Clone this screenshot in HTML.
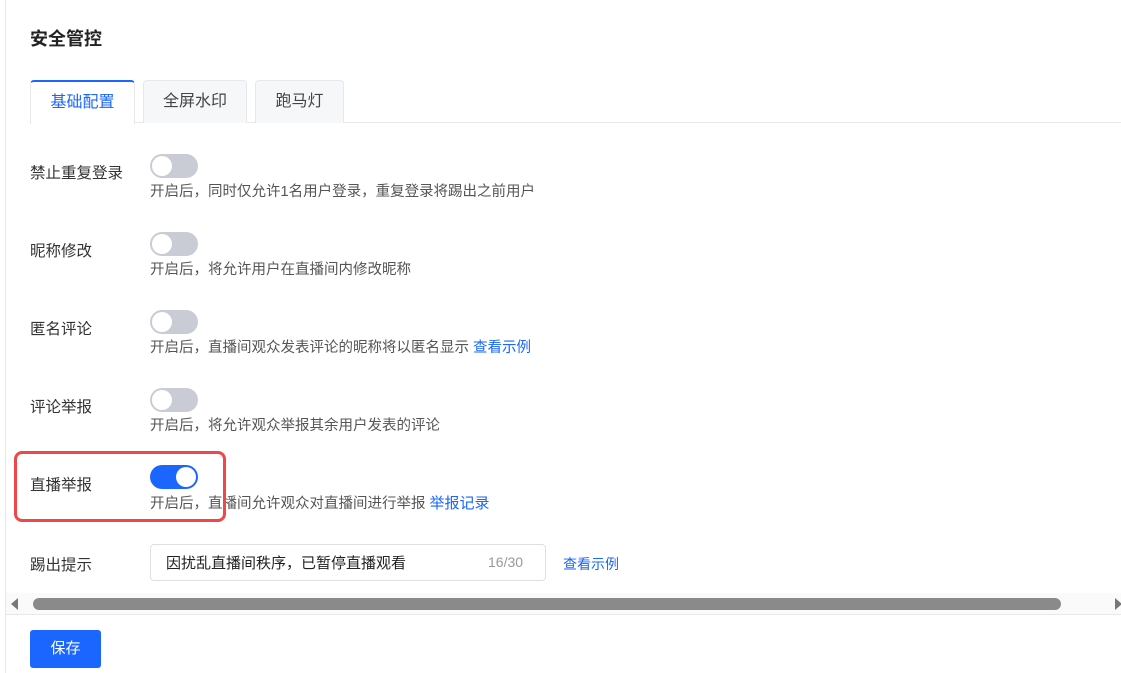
<!DOCTYPE html>
<html><head><meta charset="utf-8"><style>
*{margin:0;padding:0;box-sizing:border-box}
body{width:1121px;height:673px;overflow:hidden;background:#fff;font-family:"Liberation Sans","Noto Sans CJK SC",sans-serif;position:relative;color:#333}
.a{position:absolute;white-space:nowrap}
.lbl{font-size:15.5px;color:#333;left:30px}
.desc{font-size:14.5px;color:#555;left:150px}
.tg{position:absolute;left:150px;width:48px;height:24px;border-radius:12px;background:#c9ccd4}
.tg:after{content:"";position:absolute;left:2px;top:2px;width:20px;height:20px;border-radius:50%;background:#fff}
.tg.on{background:#1a66ff}.tg.on:after{left:26px}
.tab{position:absolute;top:80px;height:43px;border:1px solid #e6e8ec;border-bottom:none;border-radius:4px 4px 0 0;background:#f6f7f9;font-size:16px;color:#444;text-align:center;line-height:42px}
.link{color:#1a66ff}
</style></head><body>
<div class="a" style="left:5px;top:0;width:1px;height:673px;background:#e4e6ef"></div>
<div class="a" style="left:30px;top:25px;font-size:18px;font-weight:bold;color:#222">安全管控</div>
<div class="a" style="left:30px;top:122px;width:1091px;height:1px;background:#e6e8ec"></div>
<div class="tab" style="left:30px;width:105px;background:#fff;border-top:2px solid #1a66ff;color:#1a66ff;height:44px">基础配置</div>
<div class="tab" style="left:143px;width:104px">全屏水印</div>
<div class="tab" style="left:255px;width:89px">跑马灯</div>

<div class="a lbl" style="top:161px">禁止重复登录</div>
<div class="tg" style="top:154px"></div>
<div class="a desc" style="top:180px">开启后，同时仅允许1名用户登录，重复登录将踢出之前用户</div>

<div class="a lbl" style="top:239px">昵称修改</div>
<div class="tg" style="top:232px"></div>
<div class="a desc" style="top:258px">开启后，将允许用户在直播间内修改昵称</div>

<div class="a lbl" style="top:317px">匿名评论</div>
<div class="tg" style="top:310px"></div>
<div class="a desc" style="top:336px">开启后，直播间观众发表评论的昵称将以匿名显示 <span class="link">查看示例</span></div>

<div class="a lbl" style="top:395px">评论举报</div>
<div class="tg" style="top:388px"></div>
<div class="a desc" style="top:414px">开启后，将允许观众举报其余用户发表的评论</div>

<div class="a lbl" style="top:473px">直播举报</div>
<div class="tg on" style="top:465px"></div>
<div class="a desc" style="top:492px">开启后，直播间允许观众对直播间进行举报 <span class="link" style="font-size:15px">举报记录</span></div>
<div class="a" style="left:14px;top:451px;width:212px;height:71px;border:3px solid #f04848;border-radius:8px"></div>

<div class="a lbl" style="top:553px">踢出提示</div>
<div class="a" style="left:150px;top:544px;width:396px;height:37px;border:1px solid #dcdfe6;border-radius:4px"></div>
<div class="a" style="left:166px;top:552px;font-size:15px;color:#222">因扰乱直播间秩序，已暂停直播观看</div>
<div class="a" style="left:488px;top:554px;font-size:14px;color:#999">16/30</div>
<div class="a link" style="left:563px;top:554px;font-size:14px">查看示例</div>

<div class="a" style="left:6px;top:593px;width:1115px;height:21px;background:#fafafa"></div>
<div class="a" style="left:11px;top:598px;width:0;height:0;border-top:6px solid transparent;border-bottom:6px solid transparent;border-right:7px solid #777"></div>
<div class="a" style="left:1115px;top:598px;width:0;height:0;border-top:6px solid transparent;border-bottom:6px solid transparent;border-left:7px solid #777"></div>
<div class="a" style="left:33px;top:598px;width:1028px;height:12px;border-radius:6px;background:#8a8a8a"></div>
<div class="a" style="left:6px;top:614px;width:1115px;height:1px;background:#e6e8ec"></div>

<div class="a" style="left:30px;top:630px;width:71px;height:38px;background:#1a66ff;border-radius:3px;color:#fff;font-size:15px;text-align:center;line-height:38px">保存</div>
</body></html>
